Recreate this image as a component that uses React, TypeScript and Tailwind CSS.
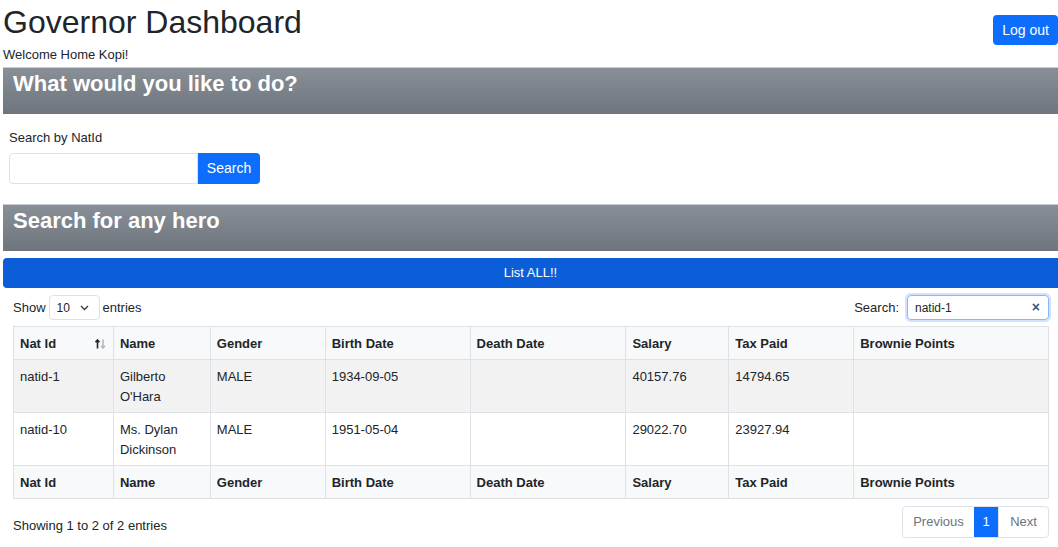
import React from "react";

interface Hero {
  natId: string;
  name: string[];
  gender: string;
  birthDate: string;
  deathDate: string;
  salary: string;
  taxPaid: string;
  browniePoints: string;
}

const heroes: Hero[] = [
  {
    natId: "natid-1",
    name: ["Gilberto", "O'Hara"],
    gender: "MALE",
    birthDate: "1934-09-05",
    deathDate: "",
    salary: "40157.76",
    taxPaid: "14794.65",
    browniePoints: "",
  },
  {
    natId: "natid-10",
    name: ["Ms. Dylan", "Dickinson"],
    gender: "MALE",
    birthDate: "1951-05-04",
    deathDate: "",
    salary: "29022.70",
    taxPaid: "23927.94",
    browniePoints: "",
  },
];

const columns = [
  { label: "Nat Id", w: "w-[99px]" },
  { label: "Name", w: "w-[97px]" },
  { label: "Gender", w: "w-[115px]" },
  { label: "Birth Date", w: "w-[145px]" },
  { label: "Death Date", w: "w-[156px]" },
  { label: "Salary", w: "w-[103px]" },
  { label: "Tax Paid", w: "w-[125px]" },
  { label: "Brownie Points", w: "w-[195px]" },
];

const SortIcon = () => (
  <svg width="11" height="10" viewBox="0 0 11 10" fill="none" strokeWidth="1.6" className="mr-[7px]">
    <path d="M2.5 9.5V1M0.5 3.2L2.5 1l2 2.2" stroke="#212529" />
    <path d="M8 0.5V9M6 6.8L8 9l2-2.2" stroke="#b5b9bd" />
  </svg>
);

const HeaderRow = ({ sortable }: { sortable?: boolean }) => (
  <div className="flex h-[32px] bg-[#f8f9fa] font-bold">
    {columns.map((col, i) => (
      <div
        key={col.label}
        className={`${col.w} flex items-center justify-between pl-[6px] pt-[1px] ${i > 0 ? "border-l border-[#dee2e6]" : ""}`}
      >
        <span>{col.label}</span>
        {sortable && i === 0 && <SortIcon />}
      </div>
    ))}
  </div>
);

export default function App() {
  return (
    <div className="w-[1058px] overflow-hidden pl-[3px] text-[13px] text-[#212529] bg-white" style={{ fontFamily: "'Liberation Sans', Arial, sans-serif" }}>
      <div className="flex items-start justify-between">
        <h1 className="text-[32px] leading-[44px] font-normal">Governor Dashboard</h1>
        <button className="mt-[15px] h-[30px] w-[65px] rounded-[4px] bg-[#0d6efd] text-[14px] text-white">
          Log out
        </button>
      </div>
      <div className="mt-[2px] leading-[16px]">Welcome Home Kopi!</div>

      <div className="mt-[4px] h-[47px] border-t border-[#c9ccd0] bg-gradient-to-b from-[#888f96] to-[#6e757d] pl-[10px] pt-[3px]">
        <h2 className="text-[22px] font-bold leading-[26px] text-white">What would you like to do?</h2>
      </div>

      <div className="pl-[6px] pt-[16px]">
        <div className="leading-[16px]">Search by NatId</div>
        <div className="mt-[7px] flex h-[31px]">
          <input className="w-[189px] rounded-l-[4px] border border-[#dee2e6] outline-none" />
          <button className="w-[62px] rounded-r-[4px] bg-[#0d6efd] text-[14px] text-white">Search</button>
        </div>
      </div>

      <div className="mt-[20px] h-[47px] border-t border-[#c9ccd0] bg-gradient-to-b from-[#888f96] to-[#6e757d] pl-[10px] pt-[3px]">
        <h2 className="text-[22px] font-bold leading-[26px] text-white">Search for any hero</h2>
      </div>

      <button className="mt-[7px] h-[30px] w-full rounded-l-[4px] bg-[#0b5ed7] text-[13px] text-white">
        List ALL!!
      </button>

      <div className="pl-[10px] pr-[9px]">
        <div className="mt-[7px] flex h-[25px] items-center justify-between">
          <div className="flex items-center">
            <span>Show</span>
            <div className="mx-[3px] flex h-[25px] w-[51px] items-center justify-between rounded-[4px] border border-[#dee2e6] pl-[7px] pr-[10px]">
              <span className="text-[12px]">10</span>
              <svg width="9" height="6" viewBox="0 0 9 6" fill="none" stroke="#343a40" strokeWidth="1.3">
                <path d="M1 1l3.5 3.5L8 1" />
              </svg>
            </div>
            <span>entries</span>
          </div>
          <div className="flex items-center">
            <span className="mr-[8px]">Search:</span>
            <div className="flex h-[25px] w-[142px] items-center justify-between rounded-[4px] border border-[#86b7fe] pl-[7px] pr-[8px] shadow-[0_0_0_2px_rgba(13,110,253,0.2)]">
              <span className="text-[12px]">natid-1</span>
              <span className="text-[14px] font-bold text-[#3a5783]">×</span>
            </div>
          </div>
        </div>

        <div className="mt-[6px] border border-[#dee2e6]">
          <HeaderRow sortable />
          {heroes.map((h, r) => (
            <div
              key={h.natId}
              className={`flex h-[53px] border-t border-[#dee2e6] leading-[20px] ${r === 0 ? "bg-[#f2f2f2]" : "bg-white"}`}
            >
              {[h.natId, h.name, h.gender, h.birthDate, h.deathDate, h.salary, h.taxPaid, h.browniePoints].map((v, i) => (
                <div
                  key={i}
                  className={`${columns[i].w} pl-[6px] pt-[7px] ${i > 0 ? "border-l border-[#dee2e6]" : ""}`}
                >
                  {Array.isArray(v) ? v.map((line) => <div key={line}>{line}</div>) : v}
                </div>
              ))}
            </div>
          ))}
          <div className="border-t border-[#dee2e6]">
            <HeaderRow />
          </div>
        </div>

        <div className="mt-[7px] flex items-start justify-between">
          <span className="pt-[12px] leading-[16px]">Showing 1 to 2 of 2 entries</span>
          <div className="flex h-[32px] overflow-hidden rounded-[4px] border border-[#dee2e6] text-[#6c757d]">
            <span className="flex w-[71px] items-center justify-center">Previous</span>
            <span className="flex w-[24px] items-center justify-center bg-[#0d6efd] text-white">1</span>
            <span className="flex w-[50px] items-center justify-center border-l border-[#dee2e6]">Next</span>
          </div>
        </div>
      </div>
    </div>
  );
}
